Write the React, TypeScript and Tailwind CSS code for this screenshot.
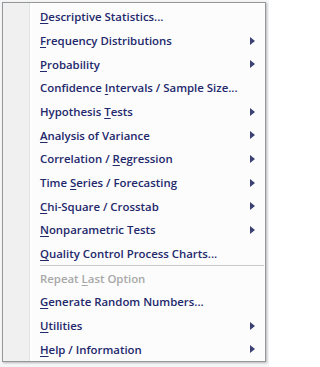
import React from "react"

type Item = {
  label: string
  u: number
  sub?: boolean
  disabled?: boolean
  sepBefore?: boolean
}

const items: Item[] = [
  { label: "Descriptive Statistics...", u: 0 },
  { label: "Frequency Distributions", u: 0, sub: true },
  { label: "Probability", u: 0, sub: true },
  { label: "Confidence Intervals / Sample Size...", u: 11 },
  { label: "Hypothesis Tests", u: 11, sub: true },
  { label: "Analysis of Variance", u: 0, sub: true },
  { label: "Correlation / Regression", u: 14, sub: true },
  { label: "Time Series / Forecasting", u: 5, sub: true },
  { label: "Chi-Square / Crosstab", u: 0, sub: true },
  { label: "Nonparametric Tests", u: 0, sub: true },
  { label: "Quality Control Process Charts...", u: 0 },
  { label: "Repeat Last Option", u: 7, disabled: true, sepBefore: true },
  { label: "Generate Random Numbers...", u: 0 },
  { label: "Utilities", u: 0, sub: true },
  { label: "Help / Information", u: 0, sub: true },
]

function Label({ text, u }: { text: string; u: number }) {
  return (
    <span>
      {text.slice(0, u)}
      <span className="underline decoration-1 underline-offset-[2px]">{text[u]}</span>
      {text.slice(u + 1)}
    </span>
  )
}

export default function App() {
  return (
    <div className="h-[367px] w-[269px] bg-[#f4f5f7] p-[2px] pb-[5px]">
      <div
        className="relative flex h-full w-[264px] flex-col border border-[#979797] bg-[#fcfcfc] pt-[2px] shadow-[1px_1px_2px_rgba(0,0,0,0.25)]"
        style={{ fontFamily: '"Open Sans", "Noto Sans", sans-serif' }}
      >
        <div className="absolute top-0 bottom-0 left-0 w-[27px] border-r border-[#e2e3e3] bg-[#f0f0f0]" />
        <div className="absolute top-0 bottom-0 left-[28px] w-px bg-white" />
        {items.map((it) => (
          <React.Fragment key={it.label}>
            {it.sepBefore && (
              <div className="relative ml-[37px] mr-[1px] h-px bg-[#c9cacc]" />
            )}
            <div
              className={
                "relative flex h-[23.8px] items-center pl-[37px] pr-[9px] text-[11.4px] font-semibold " +
                (it.disabled ? "text-[#a8a8a8]" : "text-[#23286b]")
              }
            >
              <span className="flex-1 whitespace-nowrap">
                <Label text={it.label} u={it.u} />
              </span>
              {it.sub && (
                <svg width="5" height="8" viewBox="0 0 5 8" className="mr-[1px]">
                  <path d="M0 0 L5 4 L0 8 Z" fill="#3b4173" />
                </svg>
              )}
            </div>
          </React.Fragment>
        ))}
      </div>
    </div>
  )
}
